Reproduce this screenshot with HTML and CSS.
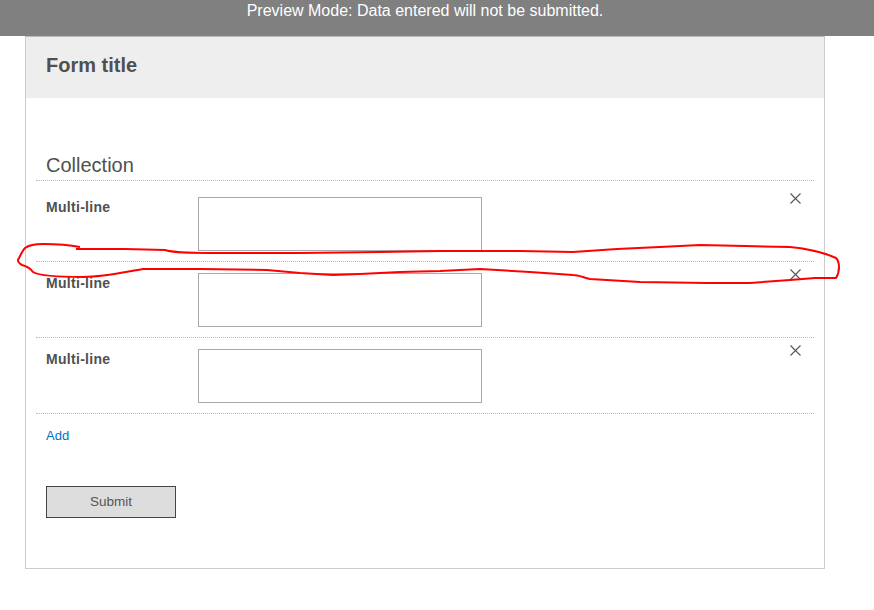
FILE: index.html
```html
<!DOCTYPE html>
<html lang="en">
<head>
    <meta charset="UTF-8">
    <title>Form title</title>
    <link rel="stylesheet" href="styles.css">
</head>
<body>
    <div class="preview-banner">Preview Mode: Data entered will not be submitted.</div>

    <form class="form-card">
        <div class="form-header">
            <h1 class="form-title">Form title</h1>
        </div>

        <div class="collection">
            <h2 class="collection-title">Collection</h2>

            <div class="collection-row first-row">
                <label class="field-label">Multi-line</label>
                <textarea class="field-input"></textarea>
                <svg class="remove-icon" viewBox="0 0 11 11"><path d="M0.5 0.5L10.5 10.5M10.5 0.5L0.5 10.5"/></svg>
            </div>
            <div class="collection-row">
                <label class="field-label">Multi-line</label>
                <textarea class="field-input"></textarea>
                <svg class="remove-icon" viewBox="0 0 11 11"><path d="M0.5 0.5L10.5 10.5M10.5 0.5L0.5 10.5"/></svg>
            </div>
            <div class="collection-row">
                <label class="field-label">Multi-line</label>
                <textarea class="field-input"></textarea>
                <svg class="remove-icon" viewBox="0 0 11 11"><path d="M0.5 0.5L10.5 10.5M10.5 0.5L0.5 10.5"/></svg>
            </div>

            <div class="add-row"><a class="add-link" href="#">Add</a></div>
        </div>

        <button class="submit-button" type="button">Submit</button>
    </form>

    <!-- red pen scribble drawn on top of the screenshot -->
    <svg class="scribble" viewBox="0 0 874 610">
        <path d="M76 249 L125 249 L165 250 C175 253 190 253 210 253 L300 253 L380 252 L440 251 L520 251 L573 252 L617 249 L660 247 L700 245 L745 246 L790 247 C810 249 825 253 836 258 C840 262 840 272 836 278 L815 278 L790 280 L750 283 L707 283 L640 282 L590 279 C582 277 578 275 573 275 L530 272 L480 269 L440 271 L400 272 L360 274 L333 275 L300 273 L267 270 L200 269 L143 269 C125 272 105 277 83 277 C60 277 40 276 33 272 C30 268 26 266 22 265 C18 263 17 260 19 258 C21 254 23 250 25 248 C29 245 35 244 43 244 C55 244 70 245 80 247"/>
    </svg>
</body>
</html>
```

FILE: styles.css
```css
* {
    box-sizing: border-box;
}

body {
    margin: 0;
    background-color: #fff;
    color: #505050;
    font-family: "Liberation Sans", Arial, sans-serif;
}

.preview-banner {
    height: 36px;
    padding-right: 24px;
    background-color: #808080;
    color: #fff;
    font-size: 16px;
    line-height: 21px;
    text-align: center;
}

.form-card {
    width: 800px;
    height: 533px;
    margin-left: 25px;
    border: 1px solid #ccc;
    border-top-color: #bbb;
}

.form-header {
    height: 61px;
    padding: 16px 20px 0;
    background-color: #eee;
}

.form-title {
    margin: 0;
    font-size: 20px;
    line-height: 24px;
    font-weight: bold;
}

.collection {
    margin: 0 10px;
}

.collection-title {
    margin: 0;
    padding: 55px 10px 3px;
    font-size: 20px;
    line-height: 24px;
    font-weight: normal;
}

.collection-row {
    display: flex;
    height: 76px;
    padding: 7px 11px 0 10px;
    border-top: 1px dotted #bbb;
}

.first-row {
    height: 81px;
    padding-top: 12px;
}

.field-label {
    width: 152px;
    padding-top: 6px;
    font-size: 14px;
    line-height: 16px;
    font-weight: bold;
    letter-spacing: 0.3px;
}

.field-input {
    display: block;
    width: 284px;
    height: 54px;
    margin: 4px 0 0;
    border: 1px solid #aaa;
    background-color: #fff;
    resize: none;
    outline: none;
}

.remove-icon {
    width: 11px;
    height: 11px;
    margin-left: auto;
    margin-right: 2px;
}

.remove-icon path {
    fill: none;
    stroke: #555;
    stroke-width: 1.1;
}

.add-row {
    height: 73px;
    padding: 14px 10px 0;
    border-top: 1px dotted #bbb;
    font-size: 13px;
    line-height: 16px;
}

.add-link {
    color: #0072c6;
    text-decoration: none;
}

.submit-button {
    display: block;
    width: 130px;
    height: 32px;
    margin-left: 20px;
    padding: 0 0 2px;
    border: 1px solid #444;
    background-color: #ddd;
    color: #555;
    font-family: inherit;
    font-size: 13.5px;
}

.scribble {
    position: absolute;
    top: 0;
    left: 0;
    width: 874px;
    height: 610px;
    pointer-events: none;
}

.scribble path {
    fill: none;
    stroke: #f00;
    stroke-width: 2;
    stroke-linejoin: round;
}
```
